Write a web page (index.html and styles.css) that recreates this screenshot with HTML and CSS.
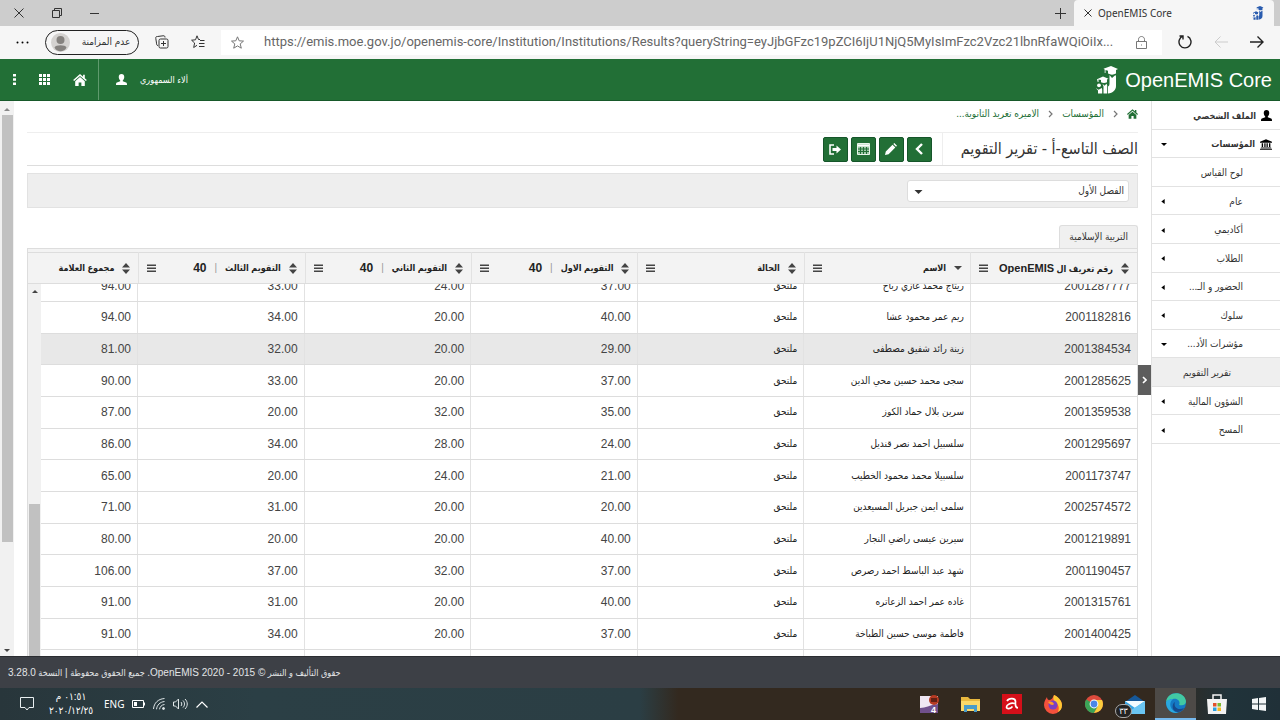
FILE: index.html
```html
<!DOCTYPE html>
<html lang="ar" dir="rtl">
<head>
<meta charset="utf-8">
<title>OpenEMIS Core</title>
<link rel="stylesheet" href="styles.css">
</head>
<body>
<svg class="defs" aria-hidden="true">
  <symbol id="i-home" viewBox="0 0 16 14"><path d="M8 0 0 7l1.200 1.300L8 2.400l6.800 5.900L16 7l-2.400-2.100V1h-2v2.100z"/><path d="M8 3.600 2.400 8.500V14h4V9.800h3.200V14h4V8.500z"/></symbol>
  <symbol id="i-user" viewBox="0 0 12 12"><path d="M6 0C4 0 3 1.300 3 3.200c0 1.600.7 3 1.600 3.800v1L1 9.400C.2 9.800 0 10.600 0 12h12c0-1.400-.2-2.200-1-2.600L7.400 8V7C8.300 6.200 9 4.800 9 3.200 9 1.300 8 0 6 0z"/></symbol>
  <symbol id="i-bank" viewBox="0 0 14 12"><path d="M7 0 0 2.800V4h14V2.800zM2 4.600h1.600V9H2zM5 4.600h1.500V9H5zM7.600 4.600h1.500V9H7.600zM10.500 4.600h1.600V9h-1.600zM1 9.400h12v1H1zM0 11h14v1H0z"/></symbol>
  <symbol id="i-logo" viewBox="0 0 24 28"><path d="M8.500 2.800 16 0l7 3-2 1v3.500c-2.500 1.500-5.500 1.500-8 0V4.800L10.500 4v3h-.8V3.600z"/><path d="M14.500 9l2.500 3 3.500-3 .5 1.500V20c0 4-3 7-8 7.500v-7c1-.5 1.500-1.500 1.500-3z"/><path d="M2 13.300 8 10.500l5.500 2.300-1.500.8v2.600c-1.800 1-4.200 1-6 0v-2.300l-2.500-.3V16h-.8z"/><path d="M7.500 17.800l2 2 2-2 .7 1.500v8.200H8.500v-7z"/><circle cx="4" cy="19.300" r="1.900"/><path d="M.8 22l2.700 1.700L6.800 22l.4 1.500v4H3v-3z"/></symbol>
  <symbol id="i-sort" viewBox="0 0 8 11"><path d="M4 0 8 4.500H0zM4 11 0 6.500h8z"/></symbol>
  <symbol id="i-down" viewBox="0 0 8 4"><path d="M0 0h8L4 4z"/></symbol>
  <symbol id="i-left" viewBox="0 0 4 6"><path d="M4 0v6L0 3z"/></symbol>
  <symbol id="i-menu" viewBox="0 0 9 9"><path d="M0 .5h9V2H0zM0 3.500h9V5H0zM0 6.500h9V8H0z"/></symbol>
</svg>

<div class="screen">
  <div class="tabbar" dir="ltr">
    <div class="win">
      <button aria-label="إغلاق"><svg width="10" height="10" class="ln"><path d="M.5.5l9 9M9.500.5l-9 9"/></svg></button>
      <button aria-label="استعادة"><svg width="10" height="10" class="ln"><path d="M.5 2.500h7v7h-7zM2.500 2.500v-2h7v7h-2"/></svg></button>
      <button aria-label="تصغير"><svg width="9" height="10" class="ln"><path d="M0 5.500h9"/></svg></button>
    </div>
    <button class="newtab" aria-label="علامة تبويب جديدة"><svg width="11" height="11" class="ln"><path d="M5.500 0v11M0 5.500h11"/></svg></button>
    <div class="tab">
      <button aria-label="إغلاق علامة التبويب"><svg width="8" height="8" class="ln"><path d="M.5.5l7 7M7.500.5l-7 7"/></svg></button>
      <span class="tabtitle">OpenEMIS Core</span>
      <svg class="favicon" width="12" height="14"><use href="#i-logo"/></svg>
    </div>
    <div class="nexttab"></div>
  </div>

  <div class="toolbar" dir="ltr">
    <button class="more" aria-label="المزيد"><svg width="13" height="3"><circle cx="1.500" cy="1.500" r="1"/><circle cx="6.500" cy="1.500" r="1"/><circle cx="11.500" cy="1.500" r="1"/></svg></button>
    <button class="profile"><svg width="19" height="19"><circle cx="9.500" cy="9.500" r="9.500" fill="#d4d2d0"/><circle cx="9.500" cy="7" r="4" fill="#85827f"/><path d="M3.500 14.500c1-3 11-3 12 0-2 5-10 5-12 0z" fill="#85827f"/></svg><span>عدم المزامنة</span></button>
    <button class="collections" aria-label="المجموعات"><svg width="14" height="14" class="ln"><rect x="4" y="4" width="9" height="9" rx="1.500"/><path d="M8.500 6v5M6 8.500h5M3 10.500C1.500 10.500 1.500 9 1.500 8L.8 3.500C.6 2 1 1.500 2.500 1.500L8 .8c1.500-.2 2 .4 2 1.700"/></svg></button>
    <button class="favs" aria-label="المفضلة"><svg width="14" height="14" class="ln"><path d="M9 4.500 7.500 4.500 6 .8 4.500 4.800.6 5.200 3.600 8 2.700 12.500 6 10.300M9 5.500h4.500M8 8.500h5.500M8 11.500h5.500"/></svg></button>
    <div class="address">
      <svg width="13" height="13" class="ln gray"><path d="M6.500.8 8.200 4.800 12.500 5.100 9.200 7.900 10.300 12.200 6.500 9.900 2.700 12.200 3.800 7.900.5 5.100 4.800 4.800z"/></svg>
      <input aria-label="العنوان" value="https://emis.moe.gov.jo/openemis-core/Institution/Institutions/Results?queryString=eyJjbGFzc19pZCI6IjU1NjQ5MyIsImFzc2Vzc21lbnRfaWQiOiIx...">
      <svg width="11" height="13" class="ln gray"><path d="M.5 5.500h10v7H.5zM2.500 5.500V3.500C2.500-.5 8.500-.5 8.500 3.500v2"/><path d="M5.500 8.500v1"/></svg>
    </div>
    <button aria-label="تحديث"><svg width="14" height="14" class="ln dark"><path d="M5 1.200a6 6 0 1 0 4.500.2M5 4.500V1H1.500"/></svg></button>
    <button aria-label="للأمام"><svg width="14" height="12" class="ln faint"><path d="M14 6H1M6.500.5 1 6l5.500 5.500"/></svg></button>
    <button aria-label="رجوع"><svg width="14" height="12" class="ln dark"><path d="M0 6h13M7.500.5 13 6l-5.500 5.500"/></svg></button>
  </div>

  <header class="apphead">
    <a class="brand" href="#"><svg width="24" height="28"><use href="#i-logo"/></svg><span dir="ltr">OpenEMIS Core</span></a>
    <div class="account"><svg width="11" height="11"><use href="#i-user"/></svg><span>ألاء السمهوري</span></div>
    <nav class="quick">
      <a href="#" aria-label="الرئيسية"><svg width="14" height="12"><use href="#i-home"/></svg></a>
      <button aria-label="التطبيقات"><svg width="11" height="11"><path d="M0 0h3v3H0zM4 0h3v3H4zM8 0h3v3H8zM0 4h3v3H0zM4 4h3v3H4zM8 4h3v3H8zM0 8h3v3H0zM4 8h3v3H4zM8 8h3v3H8z"/></svg></button>
      <button aria-label="خيارات"><svg width="3" height="11"><path d="M0 0h3v2.600H0zM0 4.200h3v2.600H0zM0 8.400h3V11H0z"/></svg></button>
    </nav>
  </header>

  <div class="body">
    <nav class="side">
      <a class="top" href="#"><svg width="11" height="11"><use href="#i-user"/></svg><span>الملف الشخصي</span></a>
      <a class="top" href="#"><svg width="12" height="11"><use href="#i-bank"/></svg><span>المؤسسات</span><svg class="car" width="6" height="3"><use href="#i-down"/></svg></a>
      <a href="#"><span>لوح القياس</span></a>
      <a href="#"><span>عام</span><svg class="car" width="4" height="5"><use href="#i-left"/></svg></a>
      <a href="#"><span>أكاديمي</span><svg class="car" width="4" height="5"><use href="#i-left"/></svg></a>
      <a href="#"><span>الطلاب</span><svg class="car" width="4" height="5"><use href="#i-left"/></svg></a>
      <a href="#"><span>الحضور و الـ...</span><svg class="car" width="4" height="5"><use href="#i-left"/></svg></a>
      <a href="#"><span>سلوك</span><svg class="car" width="4" height="5"><use href="#i-left"/></svg></a>
      <a href="#"><span>مؤشرات الأد...</span><svg class="car" width="6" height="3"><use href="#i-down"/></svg></a>
      <a class="sub" href="#"><span>تقرير التقويم</span></a>
      <a href="#"><span>الشؤون المالية</span><svg class="car" width="4" height="5"><use href="#i-left"/></svg></a>
      <a href="#"><span>المسح</span><svg class="car" width="4" height="5"><use href="#i-left"/></svg></a>
    </nav>

    <main class="main">
      <button class="handle" aria-label="طي القائمة"><svg width="5" height="8"><path d="M1 1l3 3-3 3" fill="none" stroke="#fff" stroke-width="1.600"/></svg></button>
      <nav class="crumbs">
        <a href="#" aria-label="الرئيسية"><svg width="11" height="10"><use href="#i-home"/></svg></a>
        <svg class="sep" width="5" height="8"><path d="M1 1l3 3-3 3"/></svg>
        <a href="#">المؤسسات</a>
        <svg class="sep" width="5" height="8"><path d="M1 1l3 3-3 3"/></svg>
        <a href="#">الاميره تغريد الثانوية...</a>
      </nav>
      <div class="titlebar">
        <h1>الصف التاسع-أ - تقرير التقويم</h1>
        <div class="actions">
          <button aria-label="رجوع"><svg width="10" height="12"><path d="M8 1 3 6l5 5" fill="none" stroke="#fff" stroke-width="2.400"/></svg></button>
          <button aria-label="تعديل"><svg width="12" height="12"><path d="M0 12l.8-3.600L7.500 1.700l2.800 2.800-6.700 6.700zM8.300 1 9.300 0 12 2.700l-1 1z"/></svg></button>
          <button aria-label="جدول"><svg width="13" height="12"><path d="M.5.5h12v11H.5z" fill="#9fc9a8" stroke="#e9f4eb"/><path d="M1 2.500h11" stroke="#fff" stroke-width="2"/><path d="M1 6h11M1 8.500h11M3.500 4v7M6.500 4v7M9.500 4v7" stroke="#226f36"/></svg></button>
          <button aria-label="تصدير"><svg width="12" height="11"><path d="M5 1H1v9h4" fill="none" stroke="#fff" stroke-width="1.600"/><path d="M3.500 4h4V1.500L12 5.500 7.500 9.500V7h-4z"/></svg></button>
        </div>
      </div>
      <div class="filter">
        <select aria-label="الفصل"><option>الفصل الأول</option></select>
        <svg class="selcar" width="9" height="4"><use href="#i-down"/></svg>
      </div>
      <div class="tabs"><button>التربية الإسلامية</button></div>

      <section class="grid">
        <table class="ghead">
          <thead><tr>
            <th><div><svg class="so"><use href="#i-sort"/></svg><span>رقم تعريف ال <b>OpenEMIS</b></span><svg class="me"><use href="#i-menu"/></svg></div></th>
            <th><div><svg width="8" height="4"><use href="#i-down"/></svg><span>الاسم</span><svg class="me"><use href="#i-menu"/></svg></div></th>
            <th><div><svg class="so"><use href="#i-sort"/></svg><span>الحالة</span><svg class="me"><use href="#i-menu"/></svg></div></th>
            <th><div><svg class="so"><use href="#i-sort"/></svg><span>التقويم الاول</span><i>|</i><b>40</b><svg class="me"><use href="#i-menu"/></svg></div></th>
            <th><div><svg class="so"><use href="#i-sort"/></svg><span>التقويم الثاني</span><i>|</i><b>40</b><svg class="me"><use href="#i-menu"/></svg></div></th>
            <th><div><svg class="so"><use href="#i-sort"/></svg><span>التقويم الثالث</span><i>|</i><b>40</b><svg class="me"><use href="#i-menu"/></svg></div></th>
            <th><div><svg class="so"><use href="#i-sort"/></svg><span>مجموع العلامة</span></div></th>
          </tr></thead>
        </table>
        <div class="gbody">
          <div class="rows">
            <table>
              <tbody>
                <tr><td>2001287777</td><td class="ar">ريتاج محمد غازي رباح</td><td class="ar">ملتحق</td><td>37.00</td><td>24.00</td><td>33.00</td><td>94.00</td></tr>
                <tr><td>2001182816</td><td class="ar">ريم عمر محمود عشا</td><td class="ar">ملتحق</td><td>40.00</td><td>20.00</td><td>34.00</td><td>94.00</td></tr>
                <tr class="on"><td>2001384534</td><td class="ar">زينة رائد شفيق مصطفى</td><td class="ar">ملتحق</td><td>29.00</td><td>20.00</td><td>32.00</td><td>81.00</td></tr>
                <tr><td>2001285625</td><td class="ar">سجى محمد حسين محي الدين</td><td class="ar">ملتحق</td><td>37.00</td><td>20.00</td><td>33.00</td><td>90.00</td></tr>
                <tr><td>2001359538</td><td class="ar">سرين بلال حماد الكوز</td><td class="ar">ملتحق</td><td>35.00</td><td>32.00</td><td>20.00</td><td>87.00</td></tr>
                <tr><td>2001295697</td><td class="ar">سلسبيل احمد نصر قنديل</td><td class="ar">ملتحق</td><td>24.00</td><td>28.00</td><td>34.00</td><td>86.00</td></tr>
                <tr><td>2001173747</td><td class="ar">سلسبيلا محمد محمود الخطيب</td><td class="ar">ملتحق</td><td>21.00</td><td>24.00</td><td>20.00</td><td>65.00</td></tr>
                <tr><td>2002574572</td><td class="ar">سلمى ايمن جبريل المسيعدين</td><td class="ar">ملتحق</td><td>20.00</td><td>20.00</td><td>31.00</td><td>71.00</td></tr>
                <tr><td>2001219891</td><td class="ar">سيرين عيسى راضي النجار</td><td class="ar">ملتحق</td><td>40.00</td><td>20.00</td><td>20.00</td><td>80.00</td></tr>
                <tr><td>2001190457</td><td class="ar">شهد عبد الباسط احمد رصرص</td><td class="ar">ملتحق</td><td>37.00</td><td>32.00</td><td>37.00</td><td>106.00</td></tr>
                <tr><td>2001315761</td><td class="ar">غاده عمر احمد الزعاتره</td><td class="ar">ملتحق</td><td>40.00</td><td>20.00</td><td>31.00</td><td>91.00</td></tr>
                <tr><td>2001400425</td><td class="ar">فاطمة موسى حسين الطباخة</td><td class="ar">ملتحق</td><td>37.00</td><td>20.00</td><td>34.00</td><td>91.00</td></tr>
                <tr><td></td><td></td><td></td><td></td><td></td><td></td><td></td></tr>
              </tbody>
            </table>
          </div>
          <div class="gscroll"><svg width="6" height="3"><path d="M0 3h6L3 0z"/></svg><div></div></div>
        </div>
      </section>
    </main>

    <div class="pscroll"><svg width="6" height="3" fill="#888"><path d="M0 3h6L3 0z"/></svg><div></div><svg width="6" height="3"><use href="#i-down"/></svg></div>
  </div>

  <footer class="foot"><span>حقوق التأليف و النشر <b>© 2015 - 2020 OpenEMIS.</b> جميع الحقوق محفوظة <b>| </b>النسخة <b>3.28.0</b></span></footer>

  <div class="taskbar" dir="ltr">
    <svg class="note" width="14" height="14" fill="none" stroke="#e8eef0"><path d="M.5.500h13v10H9L7 13l-2-2.500H.5z"/></svg>
    <div class="clock" dir="rtl"><span>٠١:٥١ م</span><span>٢٠٢٠/١٢/٢٥</span></div>
    <span class="lang">ENG</span>
    <svg width="13" height="8"><path d="M.5.5h11v7H.5zM12.500 2.500v3" fill="none" stroke="#fff"/><path d="M2 2h3v4H2z" fill="#fff"/></svg>
    <svg width="12" height="12" fill="none" stroke="#dfe6e8"><path d="M.5 11C1 5 5 1 11.500.5M3.500 11.300C4 7 7 4 11.500 3.500M6.500 11.300c.5-2.500 2-4.500 5-4.800"/><circle cx="10.500" cy="10.500" r="1" fill="#dfe6e8"/></svg>
    <svg width="15" height="12" fill="none" stroke="#dfe6e8"><path d="M.5 4h2l3-3v10l-3-3h-2zM8 4c1 1 1 3 0 4M10 2.500c2 2 2 5 0 7M12 1c3 3 3 7 0 10"/></svg>
    <svg width="12" height="7" fill="none" stroke="#fff" stroke-width="1.200"><path d="M.5 6.500 6 1l5.500 5.500"/></svg>
    <div class="apps">
      <button aria-label="محرر"><svg width="20" height="19"><path d="M0 1h18v17H0z" fill="#efe6f2"/><path d="M0 13c6 0 9-3 18-4v9H0z" fill="#70508d"/><circle cx="14" cy="5" r="5" fill="#b63a22"/><path d="M11 3h6v4h-6z" fill="#612015"/><text x="11" y="18" class="four">4</text></svg></button>
      <button aria-label="مستكشف الملفات"><svg width="19" height="16"><path d="M0 1h7l2 2h10v12H0z" fill="#e9b83e"/><path d="M0 5h19v10H0z" fill="#fbd869"/><path d="M3 16V9h13v7h-3v-3H6v3z" fill="#4a9cc9"/></svg></button>
      <button aria-label="Avira"><svg width="20" height="20"><path d="M0 0h20v20H0z" fill="#d50f19"/><path d="M5 7C7 3.500 13.500 4 13.500 7.500c0 3-1 6 2.500 6.500M12.500 9.500C9 8.500 4.500 10.500 4.500 13c0 2.500 4 2 6-.5" fill="none" stroke="#fff" stroke-width="1.700"/></svg></button>
      <button aria-label="Firefox"><svg width="20" height="20"><path d="M11 1c3 1 4 3 4 4 2 0 4 3 4 6a9 9 0 0 1-18 0c0-4 2-6 3-8 0 2 1 3 2 3 2 0 4-2 5-5z" fill="#f5513c"/><path d="M11 1c3 1 8 5 8 10 0 4-2 6-4 7 2-5 0-8-3-10-2-2-2-4-1-7z" fill="#ffc933"/><circle cx="10" cy="11" r="4.500" fill="#7a3fc4"/><path d="M5 8c3-1 5 0 6 2-1 2-4 1-6-2z" fill="#ff9a2b"/></svg></button>
      <button aria-label="Chrome"><svg width="18" height="18"><circle cx="9" cy="9" r="9" fill="#dd4a3c"/><path d="M9 9 1.200 4.500A9 9 0 0 0 9 18l4-7z" fill="#3ba457"/><path d="M9 5h8a9 9 0 0 1-8 13l4-7z" fill="#fbcd3d"/><circle cx="9" cy="9" r="4.400" fill="#fff"/><circle cx="9" cy="9" r="3.400" fill="#4a86e8"/></svg></button>
      <button class="mail" aria-label="البريد"><svg width="20" height="19"><path d="M0 7 10 0l10 7z" fill="#165899"/><path d="M0 6h20v13H0z" fill="#36a4e4"/><path d="M0 6h20l-10 7z" fill="#f4fbff"/><path d="M0 19 20 6v13z" fill="#6ac5f3"/></svg><span>٣٣</span></button>
      <button class="active" aria-label="Edge"><svg width="20" height="20"><circle cx="10" cy="10" r="10" fill="#147ac4"/><path d="M0 9C1-2 18-3 20 8c0 4-3 5-7 4 2-4-2-7-6-6-3 0-6 2-7 3z" fill="#42c9a3"/><path d="M7 6c-5 4-3 12 5 13.800C5 21 0 16 0 9c1-2 4-3 7-3z" fill="#2ba8df"/><path d="M9 9c-2 5 3 9 9 6-3 5-9 5-11 1-1-3 0-6 2-7z" fill="#164a8b"/></svg></button>
      <button aria-label="المتجر"><svg width="20" height="20"><path d="M6 6V1h8v5" fill="none" stroke="#f3f3f3" stroke-width="1.500"/><path d="M0 5h20l-1 15H1z" fill="#f3f3f3"/><path d="M6 9h3.500v3.500H6z" fill="#e2502b"/><path d="M10.500 9H14v3.500h-3.500z" fill="#7cb82f"/><path d="M6 13.500h3.500V17H6z" fill="#2b9fe0"/><path d="M10.500 13.500H14V17h-3.500z" fill="#f5b81f"/></svg></button>
      <button aria-label="ابدأ"><svg width="14" height="14" fill="#f2f5f6"><path d="M0 2l6-.9v5.400H0zM7 1l7-1v6.500H7zM0 7.500h6v5.400L0 12zM7 7.500h7V14l-7-1z"/></svg></button>
    </div>
  </div>
</div>
</body>
</html>
```
FILE: styles.css
```css
* { box-sizing: border-box; }
body {
  margin: 0;
  font: 12px/16px "Liberation Sans", "DejaVu Sans Condensed", "DejaVu Sans", sans-serif;
  color: #333;
  background: #fff;
}
button, input, select {
  font: inherit;
  color: inherit;
  margin: 0;
  padding: 0;
  border: 0;
  background: none;
}
button {
  display: inline-flex;
  align-items: center;
  justify-content: center;
}
a { color: inherit; text-decoration: none; }
svg { flex: none; display: block; }
.defs { position: absolute; width: 0; height: 0; }
.ln { fill: none; stroke: #333; }
.ln.gray { stroke: #777; }
.ln.dark { stroke: #222; stroke-width: 1.4; }
.ln.faint { stroke: #ccc; }

.screen { display: flex; flex-direction: column; height: 100vh; overflow: hidden; }

/* browser chrome */
.tabbar { display: flex; height: 26px; background: #cdcdcd; flex: none; }
.win { display: flex; flex: 1; align-items: center; gap: 28px; padding-left: 14px; }
.newtab { width: 28px; }
.tab {
  display: flex;
  align-items: center;
  width: 200px;
  padding: 0 10px;
  gap: 6px;
  border-radius: 4px 4px 0 0;
  background: #f6f6f6;
}
.tabtitle { flex: 1; font: 10px/16px "Noto Sans", sans-serif; }
.favicon { fill: #2a5caf; }
.nexttab { width: 6px; background: #cdcdcd; border-radius: 0 0 0 4px; }
.toolbar {
  display: flex;
  align-items: center;
  gap: 22px;
  height: 33px;
  padding: 0 16px 1px;
  background: #f6f6f6;
  flex: none;
}
.profile {
  width: 94px;
  height: 25px;
  gap: 4px;
  justify-content: flex-start;
  padding-left: 5px;
  border: 1px solid #222;
  border-radius: 13px;
  font-size: 10px;
  margin-left: -6px;
  white-space: nowrap;
}
.profile span { flex: 1; }
.collections { margin-left: -6px; }
.address {
  flex: 1;
  display: flex;
  align-items: center;
  gap: 8px;
  height: 25px;
  padding: 0 15px 0 10px;
  margin: 0 -6px;
  background: #fff;
}
.address input {
  flex: 1;
  min-width: 0;
  padding-left: 12px;
  font: 13px/20px Roboto, sans-serif;
  color: #666;
}

/* application header */
.apphead {
  display: flex;
  align-items: stretch;
  height: 42px;
  background: #226f36;
  border-bottom: 1px solid #17592a;
  color: #fff;
  fill: #fff;
  flex: none;
}
.brand {
  display: flex;
  flex-direction: row-reverse;
  align-items: center;
  gap: 6px;
  padding-right: 8px;
  margin-left: auto;
  font-size: 20px;
}
.account {
  display: flex;
  flex-direction: row-reverse;
  align-items: center;
  gap: 13px;
  padding-left: 17px;
  font-size: 9px;
}
.quick {
  display: flex;
  align-items: center;
  gap: 23px;
  padding: 0 11px 0 13px;
  border-right: 1px solid #5f9a6d;
}

/* page body */
.body { flex: 1; min-height: 0; display: flex; }
.side {
  width: 128px;
  height: 343px;
  display: grid;
  grid-auto-rows: 1fr;
  flex: none;
  font-size: 10px;
}
.side a {
  display: flex;
  align-items: center;
  gap: 5px;
  padding: 2px 37px 0 9px;
  border-bottom: 1px solid #e2e2e2;
  white-space: nowrap;
}
.side .top { padding-right: 8px; font-size: 9px; font-weight: bold; }
.side .sub { padding-right: 49px; background: #efefef; }
.car { margin-right: auto; }

.main {
  position: relative;
  flex: 1;
  min-width: 0;
  display: flex;
  flex-direction: column;
  padding: 0 13px;
  border-right: 1px solid #e2e2e2;
}
.handle {
  position: absolute;
  right: 0;
  top: 264px;
  width: 13px;
  height: 30px;
  background: #5d5d5d;
}
.crumbs {
  display: flex;
  align-items: center;
  gap: 9px;
  height: 32px;
  padding-bottom: 6px;
  border-bottom: 1px solid #eee;
  color: #226f36;
  fill: #226f36;
  font-size: 10px;
  flex: none;
}
.sep { fill: none; stroke: #777; stroke-width: 1.2; }
.titlebar {
  display: flex;
  align-items: center;
  height: 33px;
  border-bottom: 1px solid #ddd;
  flex: none;
}
h1 {
  margin: 0;
  padding-left: 18px;
  border-left: 1px solid #eee;
  font-size: 16px;
  line-height: 32px;
  font-weight: normal;
  white-space: nowrap;
}
.actions { display: flex; gap: 3px; padding-right: 10px; }
.actions button {
  width: 25px;
  height: 25px;
  border: 1px solid #15552a;
  border-radius: 2px;
  background: #226f36;
  fill: #fff;
}
.filter {
  position: relative;
  height: 35px;
  margin-top: 7px;
  padding: 6px 8px;
  background: #eee;
  border: 1px solid #e2e2e2;
  flex: none;
}
.filter select {
  display: block;
  width: 222px;
  height: 22px;
  padding: 0 4px;
  border: 1px solid #ddd;
  border-radius: 3px;
  background: #fff;
  appearance: none;
  font-size: 10px;
}
.selcar { position: absolute; right: 214px; top: 16px; fill: #333; }
.tabs { display: flex; margin-top: 17px; flex: none; }
.tabs button {
  height: 23px;
  padding: 0 9px;
  border: 1px solid #ddd;
  border-bottom: 0;
  border-radius: 3px 3px 0 0;
  background: #f0f0f0;
  font-size: 10px;
}

/* data grid */
.grid {
  flex: 1;
  min-height: 0;
  display: flex;
  flex-direction: column;
  border: 1px solid #ddd;
  border-bottom: 0;
  padding-top: 3px;
  background: #f3f3f3;
}
table { width: 100%; border-collapse: collapse; table-layout: fixed; }
.ghead { border-top: 1px solid #ddd; }
th {
  height: 31px;
  padding: 0;
  width: 15%;
  border-left: 1px solid #e2e2e2;
  border-bottom: 1px solid #ddd;
  font-size: 9px;
  color: #222;
}
th:last-child, td:last-child { width: auto; border-left: 0; }
th div { display: flex; align-items: center; gap: 8px; padding: 0 8px; white-space: nowrap; }
th b { font-size: 12px; }
th span b { font-size: 11px; }
th i { font: 10px/16px "Liberation Sans", sans-serif; color: #999; }
th svg { fill: #444; }
.so { width: 8px; height: 11px; }
.me { width: 9px; height: 9px; margin-right: auto; }
.gbody { flex: 1; min-height: 0; display: flex; background: #fff; }
.rows { flex: 1; min-width: 0; overflow: hidden; }
.rows table { height: 412px; margin-top: -14px; }
td {
  width: 15.2%;
  height: 31px;
  padding: 0 6px;
  border-left: 1px solid #e2e2e2;
  border-bottom: 1px solid #ddd;
  color: #444;
}
td.ar { font-size: 10px; color: #222; white-space: nowrap; }
.on td { background: #e8e8e8; }
.gscroll {
  width: 13px;
  display: flex;
  flex-direction: column;
  align-items: center;
  justify-content: space-between;
  padding-top: 6px;
  background: #f1f1f1;
  fill: #444;
}
.gscroll div { width: 11px; height: 152px; background: #c1c1c1; }
.pscroll {
  width: 14px;
  display: flex;
  flex-direction: column;
  align-items: center;
  padding: 7px 0 4px;
  background: #f1f1f1;
  fill: #444;
}
.pscroll div { width: 11px; height: 427px; margin: 4px 0 auto; background: #c1c1c1; }

.foot {
  display: flex;
  align-items: center;
  justify-content: flex-end;
  height: 32px;
  padding: 0 8px;
  background: #3d4046;
  border-top: 1px solid #2b2d31;
  color: #e2e4e6;
  font-size: 9px;
  flex: none;
}
.foot b { font-weight: normal; font-size: 10px; }

/* taskbar */
.taskbar {
  display: flex;
  align-items: center;
  height: 32px;
  padding-left: 20px;
  gap: 8px;
  background: linear-gradient(90deg, #28363b, #2b3f45 20%, #2b3e44 50%, #33291f 53%, #33291f 91%, #20333a 96%, #203038);
  color: #fff;
  flex: none;
}
.clock {
  display: flex;
  flex-direction: column;
  align-items: center;
  width: 50px;
  margin-left: 4px;
  font-size: 10px;
  line-height: 14px;
}
.lang { font: 10px/16px "Noto Sans", sans-serif; }
.apps { display: flex; align-self: stretch; margin-left: auto; }
.apps button { width: 41px; }
.apps button:last-child { width: 43px; }
.apps .active { background: #4d4a47; border-bottom: 2px solid #76b9ed; }
.four { font: bold 9px "Liberation Sans", sans-serif; fill: #fff; }
.mail { position: relative; }
.mail span {
  position: absolute;
  left: 1px;
  bottom: 2px;
  width: 17px;
  height: 14px;
  border: 1px solid #aaa;
  border-radius: 7px;
  background: #222;
  font-size: 9px;
  line-height: 12px;
}
```
